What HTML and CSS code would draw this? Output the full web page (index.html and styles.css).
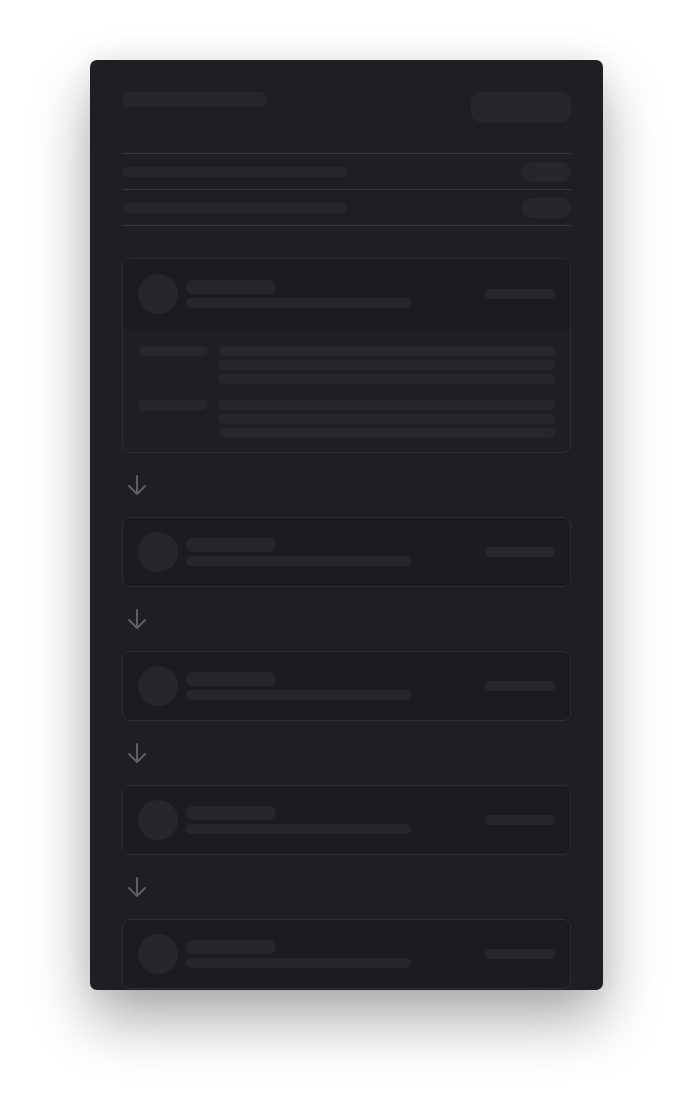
FILE: index.html
```html
<!DOCTYPE html>
<html lang="en">
<head>
<meta charset="utf-8">
<title>Loading</title>
<link rel="stylesheet" href="styles.css">
</head>
<body>
<div class="panel">
  <div class="header">
    <div class="sk title"></div>
    <div class="sk button"></div>
  </div>
  <div class="rows">
    <div class="row"><div class="sk row-bar"></div><div class="sk pill"></div></div>
    <div class="row"><div class="sk row-bar"></div><div class="sk pill"></div></div>
  </div>
  <div class="flow">
    <div class="card">
      <div class="card-head dark">
        <div class="sk avatar"></div>
        <div class="lines"><div class="sk name"></div><div class="sk sub"></div></div>
        <div class="sk meta"></div>
      </div>
      <div class="card-body">
        <div class="group">
          <div class="sk label"></div>
          <div class="values"><div class="sk val"></div><div class="sk val"></div><div class="sk val"></div></div>
        </div>
        <div class="group">
          <div class="sk label"></div>
          <div class="values"><div class="sk val"></div><div class="sk val"></div><div class="sk val"></div></div>
        </div>
      </div>
    </div>
    <div class="arrow"><svg width="20" height="20" viewBox="0 0 20 20" fill="none" stroke="currentColor" stroke-width="2" stroke-linecap="round" stroke-linejoin="round"><path d="M10 1v18M2 11l8 8 8-8"/></svg></div>
    <div class="card">
      <div class="card-head">
        <div class="sk avatar"></div>
        <div class="lines"><div class="sk name"></div><div class="sk sub"></div></div>
        <div class="sk meta"></div>
      </div>
    </div>
    <div class="arrow"><svg width="20" height="20" viewBox="0 0 20 20" fill="none" stroke="currentColor" stroke-width="2" stroke-linecap="round" stroke-linejoin="round"><path d="M10 1v18M2 11l8 8 8-8"/></svg></div>
    <div class="card">
      <div class="card-head">
        <div class="sk avatar"></div>
        <div class="lines"><div class="sk name"></div><div class="sk sub"></div></div>
        <div class="sk meta"></div>
      </div>
    </div>
    <div class="arrow"><svg width="20" height="20" viewBox="0 0 20 20" fill="none" stroke="currentColor" stroke-width="2" stroke-linecap="round" stroke-linejoin="round"><path d="M10 1v18M2 11l8 8 8-8"/></svg></div>
    <div class="card">
      <div class="card-head">
        <div class="sk avatar"></div>
        <div class="lines"><div class="sk name"></div><div class="sk sub"></div></div>
        <div class="sk meta"></div>
      </div>
    </div>
    <div class="arrow"><svg width="20" height="20" viewBox="0 0 20 20" fill="none" stroke="currentColor" stroke-width="2" stroke-linecap="round" stroke-linejoin="round"><path d="M10 1v18M2 11l8 8 8-8"/></svg></div>
    <div class="card">
      <div class="card-head">
        <div class="sk avatar"></div>
        <div class="lines"><div class="sk name"></div><div class="sk sub"></div></div>
        <div class="sk meta"></div>
      </div>
    </div>
  </div>
</div>
</body>
</html>
```
FILE: styles.css
```css
* { box-sizing: border-box; }
html, body { margin: 0; padding: 0; background: #ffffff; font-family: "Inter", "Liberation Sans", sans-serif; }
body { padding: 60px 0 120px; min-height: 1110px; }

.panel {
  width: 513px;
  height: 930px;
  margin: 0 auto;
  background: #1e1f22;
  border-radius: 7px;
  padding: 32px 32px 0;
  overflow: hidden;
  box-shadow: 0 30px 60px rgba(0,0,0,0.33), 0 0 30px rgba(0,0,0,0.06);
}

.sk { background: #26272b; }

.header { display: flex; justify-content: space-between; align-items: flex-start; }
.title { width: 145px; height: 15px; border-radius: 8px; }
.button { width: 100px; height: 30px; border-radius: 9px; }

.rows { margin-top: 31px; border-top: 1px solid #37383c; }
.row {
  height: 36px;
  border-bottom: 1px solid #37383c;
  display: flex;
  align-items: center;
  justify-content: space-between;
}
.row-bar { width: 225px; height: 10px; border-radius: 5px; }
.pill { width: 50px; height: 20px; border-radius: 10px; }

.flow { margin-top: 32px; }

.card {
  border: 1px solid #2e2f33;
  border-radius: 8px;
  background: #1e1f22;
  overflow: hidden;
}
.card-head {
  display: flex;
  align-items: center;
  padding: 14px 15px;
  background: #1b1c1f;
}
.card-head.dark { padding: 15px 15px 16px; }
.avatar { width: 40px; height: 40px; border-radius: 50%; flex: none; }
.lines { display: flex; flex-direction: column; gap: 4px; margin-left: 8px; flex: 1; }
.name { width: 90px; height: 14px; border-radius: 7px; }
.sub { width: 225px; height: 10px; border-radius: 5px; }
.meta { width: 70px; height: 10px; border-radius: 5px; flex: none; }

.card-body { padding: 16px 15px 14px; display: flex; flex-direction: column; gap: 16px; }
.group { display: flex; gap: 10px; align-items: flex-start; }
.label { width: 70px; height: 10px; border-radius: 5px; flex: none; }
.values { flex: 1; display: flex; flex-direction: column; gap: 4px; }
.val { height: 10px; border-radius: 5px; }

.arrow { padding: 22px 0 22px 5px; color: #5d5f64; line-height: 0; }
.arrow svg { display: block; }
```
